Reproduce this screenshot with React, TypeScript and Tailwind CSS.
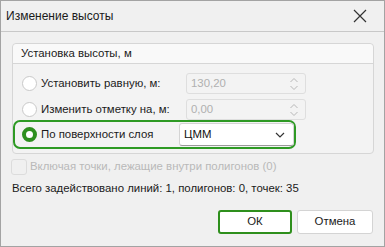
import React from "react";

const font = { fontFamily: '"Liberation Sans", Arial, sans-serif' };

function Radio({ checked }: { checked?: boolean }) {
  if (checked) {
    return (
      <div className="w-[15px] h-[15px] rounded-full border-[4px] border-[#2e8f1f] bg-white shrink-0" />
    );
  }
  return <div className="w-[15px] h-[15px] rounded-full border border-[#c9c9c9] bg-white shrink-0" />;
}

function Spinner({ value }: { value: string }) {
  return (
    <div className="w-[120px] h-[21px] rounded-[3px] border border-[#dedede] bg-[#f3f3f3] flex items-center pl-[4px] pr-[4px] text-[#b0b0b0]">
      <span className="flex-1">{value}</span>
      <svg width="10" height="16" viewBox="0 0 10 16" className="mr-[2px]">
        <path d="M1.5 6 L5 2.5 L8.5 6" fill="none" stroke="#b8b8b8" strokeWidth="1" />
        <path d="M1.5 10 L5 13.5 L8.5 10" fill="none" stroke="#b8b8b8" strokeWidth="1" />
      </svg>
    </div>
  );
}

export default function App() {
  return (
    <div
      className="w-[385px] h-[247px] border border-[#a3a3a3] bg-[#f0f0f0] flex flex-col text-[11.4px] text-[#1a1a1a] leading-none"
      style={font}
    >
      <div className="h-[31px] shrink-0 flex items-center justify-between pl-[5px] pr-[17px] border-b border-[#c8c8c8] text-[12px]">
        <span>Изменение высоты</span>
        <svg width="14" height="14" viewBox="0 0 14 14">
          <path d="M1 1 L13 13 M13 1 L1 13" stroke="#333" strokeWidth="1.2" />
        </svg>
      </div>
      <div className="flex flex-col pl-[11px] pr-[10px] pt-[11px]">
        <div className="h-[111px] border border-[#d6d6d6] rounded-[4px] flex flex-col bg-[#f3f3f3]">
          <div className="h-[20px] border-b border-[#d6d6d6] bg-[#f9f9f9] rounded-t-[4px] flex items-center pl-[8px]">
            Установка высоты, м
          </div>
          <div className="flex flex-col pt-[9px]">
            <div className="h-[21px] flex items-center pl-[9px]">
              <Radio />
              <span className="ml-[4px] w-[145px]">Установить равную, м:</span>
              <div className="ml-[0px]">
                <Spinner value="130,20" />
              </div>
            </div>
            <div className="h-[21px] flex items-center pl-[9px] mt-[5px]">
              <Radio />
              <span className="ml-[4px] w-[145px]">Изменить отметку на, м:</span>
              <Spinner value="0,00" />
            </div>
            <div className="h-[29px] w-[283px] ml-[0px] mt-[0px] border-2 border-[#2e9a24] rounded-[7px] flex items-center pl-[7px]">
              <Radio checked />
              <span className="ml-[4px] w-[145px]">По поверхности слоя</span>
              <div className="w-[120px] h-[23px] rounded-[3px] border border-[#d4d4d4] border-b-[#9a9a9a] bg-white flex items-center pl-[4px] pr-[8px]">
                <span className="flex-1 text-[#111]">ЦММ</span>
                <svg width="10" height="6" viewBox="0 0 10 6">
                  <path d="M1 1 L5 5 L9 1" fill="none" stroke="#333" strokeWidth="1.2" />
                </svg>
              </div>
            </div>
          </div>
        </div>
        <div className="flex items-center mt-[5px] h-[16px]">
          <div className="w-[16px] h-[16px] rounded-[3px] border border-[#dcdcdc] bg-[#f0f0f0] -ml-[1px]" />
          <span className="ml-[3px] text-[#b9b9b9]">Включая точки, лежащие внутри полигонов (0)</span>
        </div>
        <div className="mt-[6px] h-[16px] flex items-center">
          Всего задействовано линий: 1, полигонов: 0, точек: 35
        </div>
        <div className="flex justify-end gap-[5px] mt-[13px] pr-[1px]">
          <div className="w-[74px] h-[24px] rounded-[3px] border-2 border-[#2e8f1c] bg-white flex items-center justify-center">
            ОК
          </div>
          <div className="w-[76px] h-[24px] rounded-[3px] border border-[#d4d4d4] bg-white flex items-center justify-center">
            Отмена
          </div>
        </div>
      </div>
    </div>
  );
}
